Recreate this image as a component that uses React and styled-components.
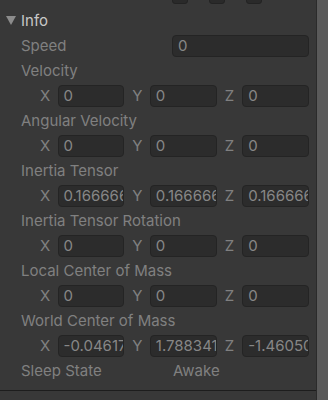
import React from "react";
import styled, { createGlobalStyle } from "styled-components";

const Global = createGlobalStyle`
  html, body { margin: 0; padding: 0; background: #383838; }
  body { font-family: Inter, "Noto Sans", sans-serif; overflow: hidden; }
`;

const Frame = styled.div`
  display: flex;
  width: 328px;
  height: 400px;
  background: #383838;
`;

const Panel = styled.div`
  flex: 1;
  display: flex;
  flex-direction: column;
  border-right: 1px solid #2b2b2b;
  background: #383838;
`;

const Scrollbar = styled.div`
  width: 11px;
  background: #5a5a5a;
`;

const TopRow = styled.div`
  height: 8px;
  overflow: hidden;
  display: flex;
  align-items: flex-end;
  padding: 0 0 4px 172px;
  box-sizing: border-box;
  gap: 21px;
`;

const Check = styled.div`
  width: 16px;
  height: 18px;
  flex: none;
  border-radius: 3px;
  background: #2a2a2a;
  border: 1px solid #232323;
  box-sizing: border-box;
`;

const Section = styled.div`
  display: flex;
  flex-direction: column;
  padding-bottom: 7px;
  border-bottom: 1px solid #1d1d1d;
`;

const Row = styled.div`
  height: 25px;
  display: flex;
  align-items: center;
  padding-left: 21px;
  padding-right: 7px;
  box-sizing: border-box;
`;

const Foldout = styled(Row)`
  padding-left: 6px;
  gap: 5px;
  color: #c8c8c8;
  font-size: 15px;
`;

const Arrow = styled.svg`
  width: 10px;
  height: 9px;
  flex: none;
`;

const Label = styled.span`
  color: #808080;
  font-size: 15px;
  white-space: nowrap;
  width: ${(p) => (p.$w ? `${p.$w}px` : "auto")};
  flex: none;
`;

const Field = styled.div`
  height: 22px;
  box-sizing: border-box;
  border-radius: 4px;
  background: #2c2c2c;
  border: 1px solid #242424;
  color: #878787;
  font-size: 15px;
  line-height: 20px;
  padding-left: 5px;
  overflow: hidden;
  white-space: nowrap;
  min-width: 0;
  flex: 1;
`;

const Value = styled.span`
  color: #808080;
  font-size: 15px;
`;

const VecRow = styled.div`
  height: 25px;
  display: grid;
  grid-template-columns: repeat(3, 1fr);
  column-gap: 8px;
  align-items: center;
  padding: 0 7px 0 40px;
  box-sizing: border-box;
`;

const Group = styled.div`
  display: flex;
  align-items: center;
  gap: 8px;
  min-width: 0;
`;

const Axis = styled.span`
  color: #808080;
  font-size: 15px;
  width: 9.5px;
  flex: none;
`;

const Vec = ({ v }) => (
  <VecRow>
    {["X", "Y", "Z"].map((a, i) => (
      <Group key={a}>
        <Axis>{a}</Axis>
        <Field>{v[i]}</Field>
      </Group>
    ))}
  </VecRow>
);

const vectors = [
  ["Velocity", ["0", "0", "0"]],
  ["Angular Velocity", ["0", "0", "0"]],
  ["Inertia Tensor", ["0.1666666", "0.1666666", "0.1666666"]],
  ["Inertia Tensor Rotation", ["0", "0", "0"]],
  ["Local Center of Mass", ["0", "0", "0"]],
  ["World Center of Mass", ["-0.0461735", "1.7883417", "-1.4605026"]],
];

export default function App() {
  return (
    <Frame>
      <Global />
      <Panel>
        <TopRow>
          <Check />
          <Check />
          <Check />
        </TopRow>
        <Section>
          <Foldout>
            <Arrow viewBox="0 0 10 9">
              <path d="M0 0 H10 L5 9 Z" fill="#8c8c8c" />
            </Arrow>
            Info
          </Foldout>
          <Row>
            <Label $w={151}>Speed</Label>
            <Field>0</Field>
          </Row>
          {vectors.map(([name, v]) => (
            <React.Fragment key={name}>
              <Row>
                <Label>{name}</Label>
              </Row>
              <Vec v={v} />
            </React.Fragment>
          ))}
          <Row>
            <Label $w={152}>Sleep State</Label>
            <Value>Awake</Value>
          </Row>
        </Section>
      </Panel>
      <Scrollbar />
    </Frame>
  );
}
